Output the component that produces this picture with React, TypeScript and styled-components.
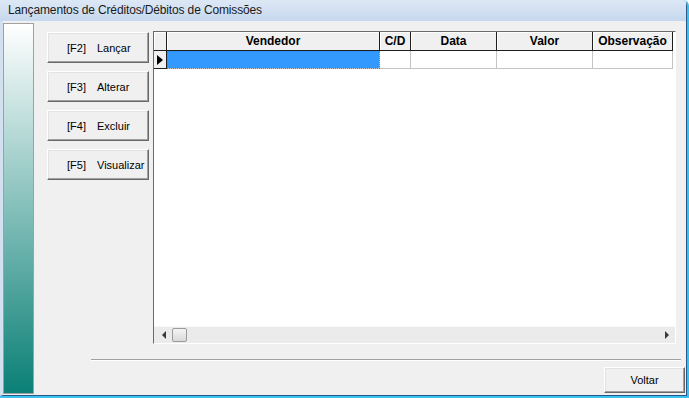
import styled, { createGlobalStyle } from "styled-components";

const GlobalStyle = createGlobalStyle`
  * { box-sizing: border-box; }
  body {
    margin: 0;
    font-family: "Liberation Sans", Arial, sans-serif;
    background: #ffffff;
  }
`;

const columns = [
  { title: "Vendedor", width: 213 },
  { title: "C/D", width: 31 },
  { title: "Data", width: 86 },
  { title: "Valor", width: 96 },
  { title: "Observação", width: 80 },
];

const actions = [
  { key: "[F2]", label: "Lançar" },
  { key: "[F3]", label: "Alterar" },
  { key: "[F4]", label: "Excluir" },
  { key: "[F5]", label: "Visualizar" },
];

const App = () => {
  return (
    <>
      <GlobalStyle />
      <Window>
        <TitleBar>Lançamentos de Créditos/Débitos de Comissões</TitleBar>
        <Body>
          <SidePanel />
          <Main>
            <Upper>
              <ButtonColumn>
                {actions.map((a) => (
                  <ActionButton key={a.key}>
                    <KeyLabel>{a.key}</KeyLabel>
                    <span>{a.label}</span>
                  </ActionButton>
                ))}
              </ButtonColumn>
              <Grid>
                <Row>
                  <HeaderCell />
                  {columns.map((c) => (
                    <HeaderCell key={c.title}>{c.title}</HeaderCell>
                  ))}
                </Row>
                <Row>
                  <IndicatorCell>
                    <Pointer />
                  </IndicatorCell>
                  {columns.map((c, i) => (
                    <DataCell key={c.title} $selected={i === 0} />
                  ))}
                </Row>
                <Filler />
                <HScroll>
                  <Arrow $dir="left" />
                  <Thumb />
                  <Track />
                  <Arrow $dir="right" />
                </HScroll>
              </Grid>
            </Upper>
            <Separator />
            <Footer>
              <FooterButton>Voltar</FooterButton>
            </Footer>
          </Main>
        </Body>
      </Window>
    </>
  );
};

export default App;

const Window = styled.div`
  width: 689px;
  height: 398px;
  display: flex;
  flex-direction: column;
  background: #f0f0f0;
  border-right: 2px solid #3cc0ec;
  border-bottom: 2px solid #3cc0ec;
  border-top-right-radius: 6px;
  overflow: hidden;
`;

const TitleBar = styled.div`
  height: 21px;
  flex: none;
  padding: 3px 0 0 8px;
  font-size: 12px;
  letter-spacing: -0.14px;
  color: #1a1a1a;
  background: linear-gradient(#dde8f5, #c6d8ee);
  border-right: 1px solid #2c5d8c;
`;

const Body = styled.div`
  flex: 1;
  display: flex;
  border-left: 3px solid #d3e0f0;
  border-right: 1px solid #24578a;
  border-bottom: 1px solid #24578a;
`;

const SidePanel = styled.div`
  width: 31px;
  flex: none;
  margin: 2px 0 1px 0;
  border: 1px solid #a0a0a0;
  background: linear-gradient(#ffffff, #0a8076);
`;

const Main = styled.div`
  flex: 1;
  display: flex;
  flex-direction: column;
`;

const Upper = styled.div`
  display: flex;
  align-items: flex-start;
  padding: 10px 0 0 13px;
`;

const ButtonColumn = styled.div`
  display: flex;
  flex-direction: column;
  gap: 8px;
  margin-top: 1px;
`;

const ActionButton = styled.div`
  width: 102px;
  height: 31px;
  display: flex;
  align-items: center;
  padding-left: 19px;
  font-size: 11px;
  color: #000;
  background: #f0f0f0;
  border: 1px solid;
  border-color: #ffffff #696969 #696969 #ffffff;
  box-shadow: inset -1px -1px 0 #a0a0a0, inset 1px 1px 0 #e3e3e3;
`;

const KeyLabel = styled.span`
  width: 30px;
  flex: none;
`;

const Grid = styled.div`
  width: 523px;
  height: 313px;
  margin-left: 4px;
  display: flex;
  flex-direction: column;
  background: #ffffff;
  border: 1px solid;
  border-color: #6a6a6a #ffffff #ffffff #6a6a6a;
`;

const Row = styled.div`
  display: grid;
  grid-template-columns: 13px ${columns.map((c) => `${c.width}px`).join(" ")};
`;

const HeaderCell = styled.div`
  height: 19px;
  display: flex;
  align-items: center;
  justify-content: center;
  font-size: 12px;
  font-weight: bold;
  color: #000;
  background: #f0f0f0;
  border-right: 1px solid #1e1e1e;
  border-bottom: 1px solid #1e1e1e;
  box-shadow: inset 1px 1px 0 #ffffff;
`;

const IndicatorCell = styled.div`
  height: 18px;
  display: flex;
  align-items: center;
  padding-left: 3px;
  background: #f0f0f0;
  border-right: 1px solid #1e1e1e;
  border-bottom: 1px solid #1e1e1e;
`;

const Pointer = styled.div`
  width: 0;
  height: 0;
  border-left: 6px solid #000;
  border-top: 5px solid transparent;
  border-bottom: 5px solid transparent;
`;

const DataCell = styled.div<{ $selected?: boolean }>`
  height: 18px;
  background: ${(p) => (p.$selected ? "#3399ff" : "#ffffff")};
  border-right: 1px solid #c4c4c4;
  border-bottom: 1px solid #c4c4c4;
  outline: ${(p) => (p.$selected ? "1px dotted #b86a1c" : "none")};
  outline-offset: -1px;
`;

const Filler = styled.div`
  flex: 1;
`;

const HScroll = styled.div`
  height: 17px;
  flex: none;
  width: 521px;
  display: flex;
  align-items: center;
  padding: 0 6px 0 8px;
  background: #ebebeb;
  border-top: 1px solid #f8f8f8;
`;

const Track = styled.div`
  flex: 1;
`;

const Arrow = styled.div<{ $dir: "left" | "right" }>`
  width: 0;
  height: 0;
  border-top: 4px solid transparent;
  border-bottom: 4px solid transparent;
  ${(p) =>
    p.$dir === "left"
      ? "border-right: 4px solid #3a3a3a;"
      : "border-left: 4px solid #3a3a3a;"}
`;

const Thumb = styled.div`
  width: 15px;
  height: 14px;
  margin-left: 6px;
  border: 1px solid #9b9b9b;
  border-radius: 2px;
  background: linear-gradient(#f4f4f4, #d9d9d9);
`;

const Separator = styled.div`
  height: 2px;
  margin: 15px 5px 0 57px;
  border-top: 1px solid #a0a0a0;
  border-bottom: 1px solid #ffffff;
`;

const Footer = styled.div`
  display: flex;
  justify-content: flex-end;
  padding: 6px 1px 0 0;
`;

const FooterButton = styled.div`
  width: 81px;
  height: 26px;
  display: flex;
  align-items: center;
  justify-content: center;
  font-size: 11px;
  color: #000;
  background: #f0f0f0;
  border: 1px solid;
  border-color: #ffffff #696969 #696969 #ffffff;
  box-shadow: inset -1px -1px 0 #a0a0a0, inset 1px 1px 0 #e3e3e3;
`;
